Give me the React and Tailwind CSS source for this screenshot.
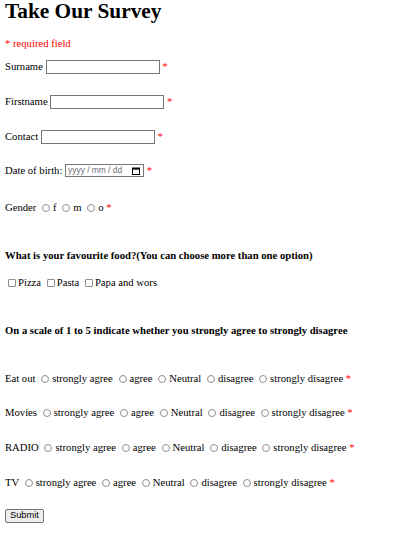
import React from 'react';

const Req = () => <span className="text-[#ff0000]">*</span>;

const Radio = () => (
  <span className="inline-block w-[8px] h-[8px] rounded-full border border-[#8f8f8f] bg-white ml-[3px] mr-[3px] align-middle -mt-[2px]" />
);

const Check = () => (
  <span className="inline-block w-[8px] h-[8px] rounded-[1px] border border-[#8f8f8f] bg-white ml-[3px] mr-[2px] align-middle -mt-[2px]" />
);

const TextBox = () => (
  <input type="text" className="w-[114px] h-[14px] border border-[#767676] bg-white align-middle -mt-[2px]" />
);

function Scale({ label, className }) {
  const opts = ['strongly agree', 'agree', 'Neutral', 'disagree', 'strongly disagree'];
  return (
    <div className={'h-[12px] leading-[12px] whitespace-nowrap ' + className}>
      {label}{' '}
      {opts.map((o) => (
        <React.Fragment key={o}>
          <Radio />
          {o}{' '}
        </React.Fragment>
      ))}
      <Req />
    </div>
  );
}

export default function App() {
  return (
    <div className="min-h-[539px] bg-white text-black px-[5px] text-[10.67px] font-['Liberation_Serif',serif]">
      <h1 className="h-[22px] leading-[22px] text-[21.33px] font-bold">Take Our Survey</h1>
      <div className="mt-[15px] h-[12px] leading-[12px] text-[#ff0000]">* required field</div>

      <div className="mt-[9px] h-[16px] leading-[16px] whitespace-nowrap">
        Surname <TextBox /> <Req />
      </div>
      <div className="mt-[19px] h-[16px] leading-[16px] whitespace-nowrap">
        Firstname <TextBox /> <Req />
      </div>
      <div className="mt-[19px] h-[16px] leading-[16px] whitespace-nowrap">
        Contact <TextBox /> <Req />
      </div>
      <div className="mt-[18px] h-[16px] leading-[16px] whitespace-nowrap">
        Date of birth:{' '}
        <span className="inline-flex items-center justify-between w-[79px] h-[13px] border border-[#767676] bg-white align-middle -mt-[2px] pl-[2px] pr-[3px] font-['Liberation_Sans',sans-serif] text-[8.4px] leading-[11px] text-[#6d6d7a]">
          <span className="whitespace-pre">yyyy / mm / dd</span>
          <svg width="8" height="8" viewBox="0 0 8 8" className="text-black">
            <rect x="0.5" y="1" width="7" height="6.5" fill="none" stroke="currentColor" strokeWidth="1" />
            <rect x="0.5" y="1" width="7" height="1.6" fill="currentColor" />
          </svg>
        </span>{' '}
        <Req />
      </div>
      <div className="mt-[21px] h-[16px] leading-[16px] whitespace-nowrap">
        Gender <Radio />f <Radio />m <Radio />o <Req />
      </div>

      <div className="mt-[34px] h-[12px] leading-[12px] font-bold whitespace-nowrap">
        What is your favourite food?(You can choose more than one option)
      </div>
      <div className="mt-[15px] h-[12px] leading-[12px] whitespace-nowrap">
        <Check />Pizza <Check />Pasta <Check />Papa and wors
      </div>

      <div className="mt-[36px] h-[12px] leading-[12px] font-bold whitespace-nowrap">
        On a scale of 1 to 5 indicate whether you strongly agree to strongly disagree
      </div>

      <Scale label="Eat out" className="mt-[36px]" />
      <Scale label="Movies" className="mt-[22px]" />
      <Scale label="RADIO" className="mt-[23px]" />
      <Scale label="TV" className="mt-[23px]" />

      <div className="mt-[18px]">
        <button
          type="button"
          className="h-[14px] px-[4px] border border-[#767676] rounded-[2px] bg-[#efefef] font-['Liberation_Sans',sans-serif] text-[9.3px] leading-[11px] text-black"
        >
          Submit
        </button>
      </div>
    </div>
  );
}
